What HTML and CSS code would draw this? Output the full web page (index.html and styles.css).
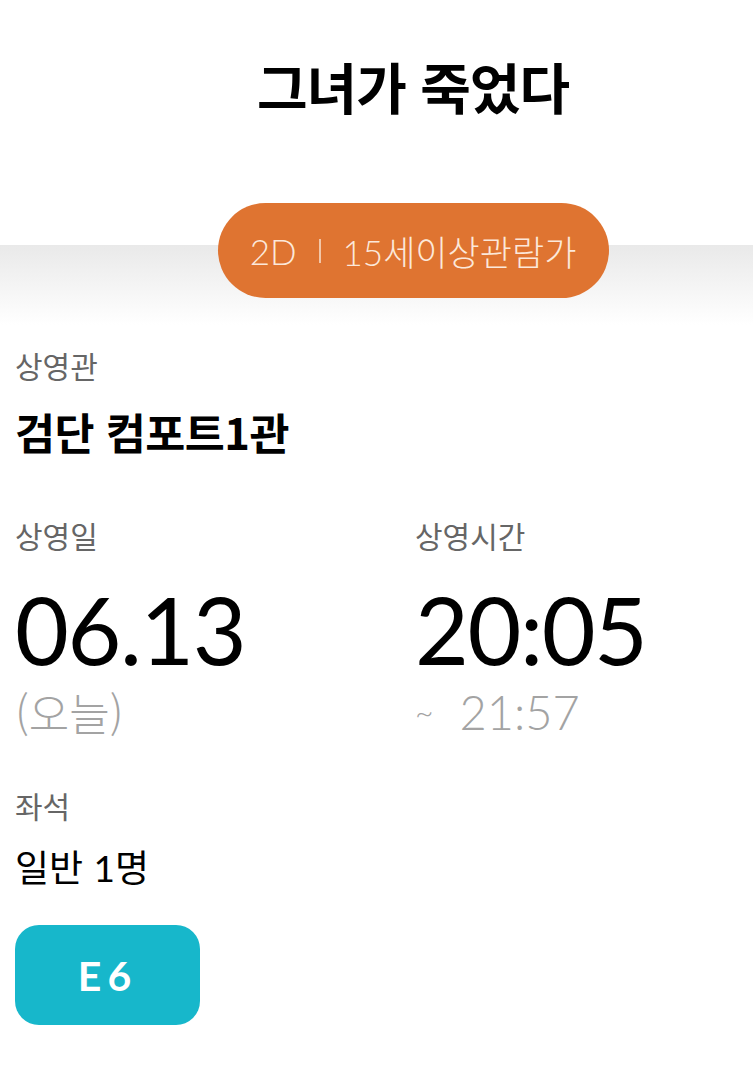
FILE: index.html
```html
<!DOCTYPE html>
<html lang="ko">

<head>
    <meta charset="UTF-8" />
    <meta name="viewport" content="width=device-width, initial-scale=1.0" />
    <title>예매 정보</title>
    <link rel="stylesheet" href="styles.css">
</head>

<body>
    <header class="movie_head">
        <h1 class="movie_title">그녀가 죽었다</h1>
    </header>
    <div class="band">
        <div class="badge">
            <span>2D</span>
            <span class="sep"></span>
            <span>15세이상관람가</span>
        </div>
    </div>
    <main class="info">
        <section class="block">
            <div class="label">상영관</div>
            <div class="theater">검단 컴포트1관</div>
        </section>
        <section class="row">
            <div class="block">
                <div class="label">상영일</div>
                <div class="big">06.13</div>
                <div class="sub">(오늘)</div>
            </div>
            <div class="block">
                <div class="label">상영시간</div>
                <div class="big">20:05</div>
                <div class="sub num"><span class="tilde">~</span>21:57</div>
            </div>
        </section>
        <section class="block">
            <div class="label">좌석</div>
            <div class="seat_type">일반 <span class="cnt">1</span>명</div>
            <div class="seat">E6</div>
        </section>
    </main>
</body>

</html>
```

FILE: styles.css
```css
body {
    margin: 0;
    background: #fff;
    font-family: "Noto Sans CJK KR", "Noto Sans", sans-serif;
    color: #000;
}

/* the header block sits a bit right of the window centre */
.movie_head {
    height: 245px;
    padding-left: 73px;
    display: flex;
    justify-content: center;
}

.movie_title {
    margin: 0;
    padding-top: 50px;
    font-size: 55px;
    font-weight: 700;
    line-height: 70px;
    letter-spacing: -1px;
}

.band {
    height: 80px;
    padding-left: 73px;
    background: linear-gradient(#e9e9e9, #fff);
    display: flex;
    justify-content: center;
}

.badge {
    margin-top: -42px;
    height: 95px;
    width: 391px;
    box-sizing: border-box;
    border-radius: 48px;
    background: #df7431;
    color: #fce8da;
    font-family: Lato, "Noto Sans CJK KR", sans-serif;
    font-weight: 300;
    font-size: 35px;
    display: flex;
    align-items: center;
    justify-content: center;
    gap: 22px;
}

.sep {
    width: 2px;
    height: 24px;
    background: #f2c6a8;
}

.info {
    padding: 20px 15px 0;
}

.label {
    color: #666;
    font-size: 30px;
    line-height: 40px;
}

.theater {
    margin-top: 20px;
    font-size: 43.5px;
    font-weight: 700;
    line-height: 54px;
    letter-spacing: -0.5px;
}

.row {
    display: grid;
    grid-template-columns: 400px 1fr;
    margin-top: 56px;
}

.big {
    font-family: Lato, sans-serif;
    font-size: 93px;
    font-weight: 400;
    line-height: 100px;
    margin-top: 24px;
    letter-spacing: -1.5px;
}

.sub {
    color: #a3a3a3;
    font-size: 44px;
    font-weight: 300;
    line-height: 54px;
    margin-top: 6px;
}

.sub.num {
    font-family: Lato, sans-serif;
    font-size: 47px;
}

.tilde {
    font-size: 32px;
    margin-right: 26px;
    vertical-align: 6px;
}

.row + .block {
    margin-top: 46px;
}

.seat_type {
    margin-top: 14px;
    font-size: 37px;
    line-height: 54px;
}

.cnt {
    font-family: Lato, sans-serif;
}

.seat {
    margin-top: 30px;
    width: 185px;
    height: 100px;
    border-radius: 24px;
    background: #17b7cb;
    color: #fff;
    font-family: Lato, sans-serif;
    font-weight: 700;
    font-size: 41px;
    letter-spacing: 6px;
    display: flex;
    align-items: center;
    justify-content: center;
}
```
